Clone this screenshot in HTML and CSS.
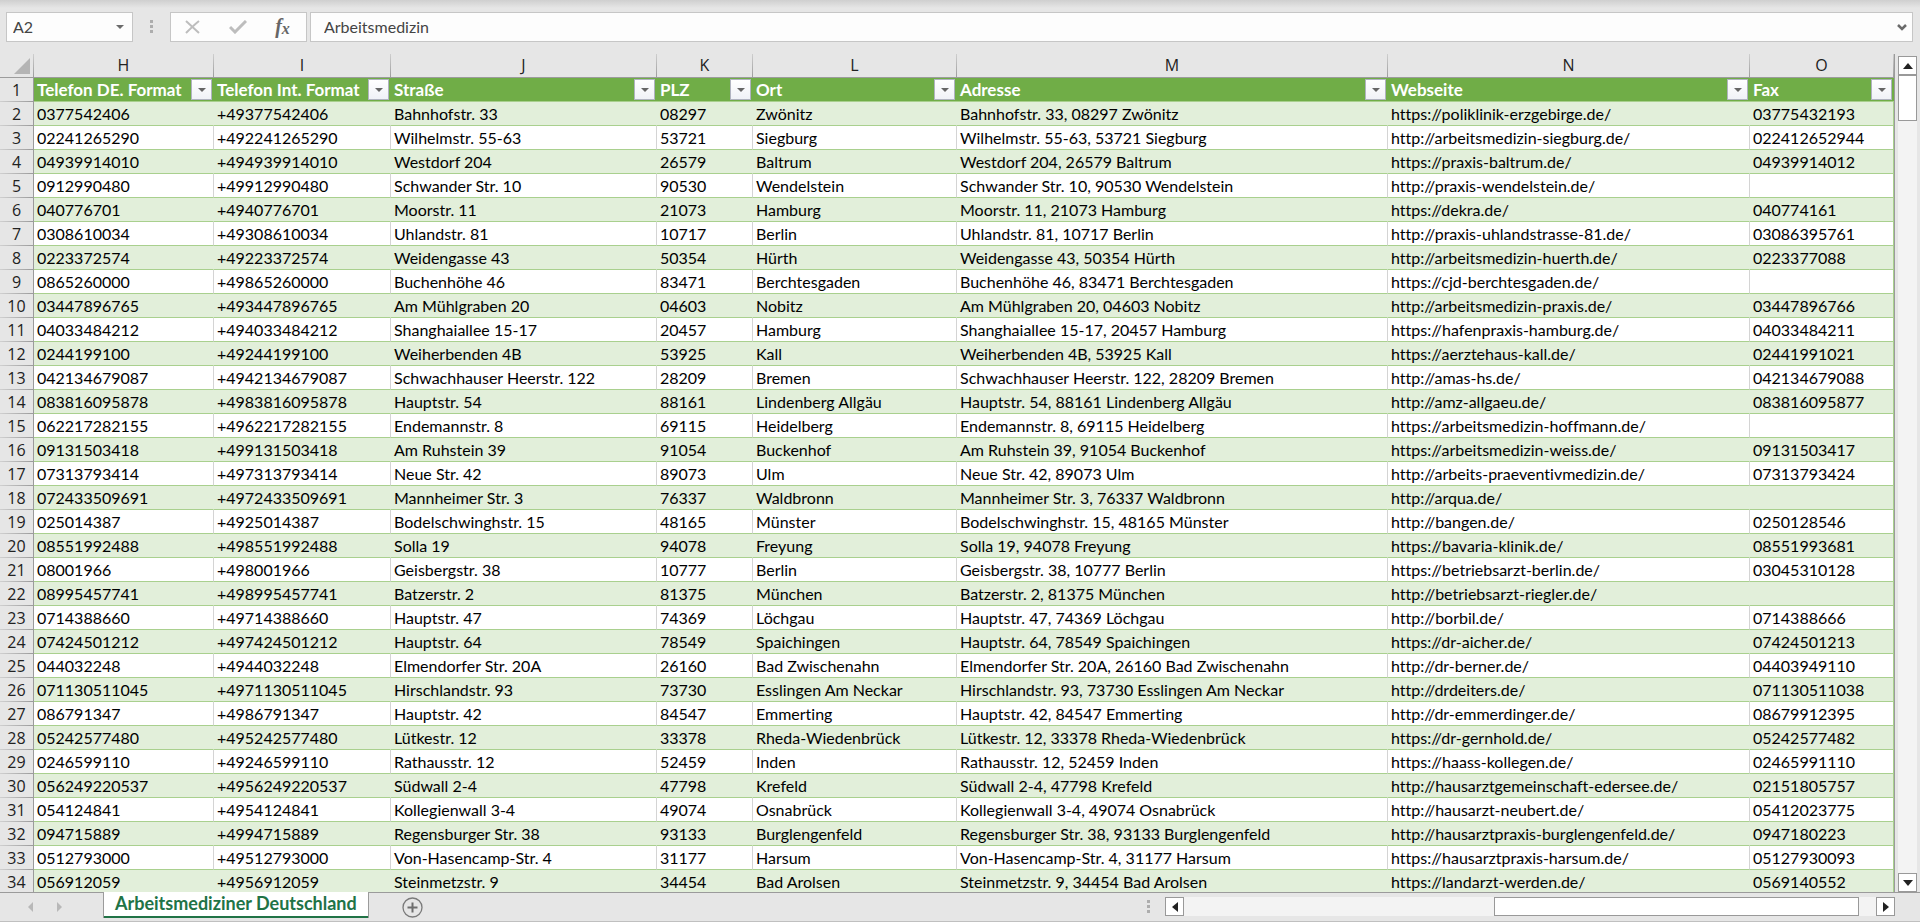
FILE: index.html
```html
<!DOCTYPE html>
<html lang="de">
<head>
<meta charset="utf-8">
<title>Arbeitsmediziner Deutschland</title>
<link rel="stylesheet" href="styles.css">
</head>
<body>
<header class="formula-bar">
  <div class="name-box">
    <input class="name-input" type="text" value="A2" aria-label="Namenfeld">
    <button class="name-drop" type="button" aria-label="Namen anzeigen"><svg width="8" height="4" viewBox="0 0 8 4"><path d="M0 0h8L4 4z" fill="#6b6b6b"/></svg></button>
  </div>
  <span class="grip"><i></i><i></i><i></i></span>
  <div class="formula-tools">
    <button type="button" aria-label="Abbrechen"><svg width="16" height="14" viewBox="0 0 16 14"><path d="M1 1l13 12M14 1C9 5 5 9 1 13" fill="none" stroke="#bdbdbd" stroke-width="2"/></svg></button>
    <button type="button" aria-label="Eingeben"><svg width="18" height="14" viewBox="0 0 18 14"><path d="M1 7l5 5L17 1" fill="none" stroke="#bdbdbd" stroke-width="3"/></svg></button>
    <button type="button" class="fx" aria-label="Funktion einfügen"><span class="fx-f">f</span><span class="fx-x">x</span></button>
  </div>
  <div class="formula-box">
    <input class="formula-input" type="text" value="Arbeitsmedizin" aria-label="Bearbeitungsleiste">
    <button class="formula-expand" type="button" aria-label="Erweitern"><svg width="10" height="7" viewBox="0 0 10 7"><path d="M1 1l4 4 4-4" fill="none" stroke="#6b6b6b" stroke-width="2.5"/></svg></button>
  </div>
</header>

<main class="workspace">
  <div class="sheet">
    <table class="grid">
      <colgroup>
        <col class="c-row"><col class="c-h"><col class="c-i"><col class="c-j"><col class="c-k"><col class="c-l"><col class="c-m"><col class="c-n"><col class="c-o">
      </colgroup>
      <thead>
        <tr class="letters">
          <th class="corner"><svg width="16" height="16" viewBox="0 0 16 16"><path d="M16 0v16H0z" fill="#b4b4b4"/></svg></th>
          <th>H</th><th>I</th><th>J</th><th>K</th><th>L</th><th>M</th><th>N</th><th>O</th>
        </tr>
      </thead>
      <tbody id="rows"></tbody>
    </table>
  </div>
  <div class="vscroll">
    <button type="button" aria-label="Nach oben"><svg width="10" height="6" viewBox="0 0 10 6"><path d="M5 0l5 6H0z" fill="#222"/></svg></button>
    <div class="vthumb"></div>
    <div class="track"></div>
    <button type="button" aria-label="Nach unten"><svg width="10" height="6" viewBox="0 0 10 6"><path d="M0 0h10L5 6z" fill="#222"/></svg></button>
  </div>
</main>

<footer class="tab-bar">
  <div class="tab-nav">
    <button type="button" aria-label="Vorheriges Blatt"><svg width="5" height="10" viewBox="0 0 5 10"><path d="M5 0v10L0 5z" fill="#b8b8b8"/></svg></button>
    <button type="button" aria-label="Nächstes Blatt"><svg width="5" height="10" viewBox="0 0 5 10"><path d="M0 0v10l5-5z" fill="#b8b8b8"/></svg></button>
  </div>
  <button class="tab" type="button">Arbeitsmediziner Deutschland</button>
  <button class="add" type="button" aria-label="Neues Blatt"><svg width="21" height="21" viewBox="0 0 21 21"><circle cx="10.500" cy="10.500" r="9.500" fill="none" stroke="#7a7a7a" stroke-width="1.300"/><path d="M10.500 5.500v10M5.500 10.500h10" stroke="#6e6e6e" stroke-width="2"/></svg></button>
  <span class="grip grip-end"><i></i><i></i><i></i></span>
  <div class="hscroll">
    <button type="button" aria-label="Nach links"><svg width="6" height="10" viewBox="0 0 6 10"><path d="M6 0v10L0 5z" fill="#222"/></svg></button>
    <div class="track"></div>
    <div class="hthumb"></div>
    <div class="track-end"></div>
    <button type="button" aria-label="Nach rechts"><svg width="6" height="10" viewBox="0 0 6 10"><path d="M0 0v10l6-5z" fill="#222"/></svg></button>
  </div>
</footer>
<script src="script.js"></script>
</body>
</html>
```
FILE: styles.css
```css
* { box-sizing: border-box; }

body {
  margin: 0;
  height: 100vh;
  display: flex;
  flex-direction: column;
  overflow: hidden;
  background: #e6e6e6;
  font-family: Lato, "Noto Sans", sans-serif;
  font-size: 16px;
  font-variant-ligatures: none;
  color: #000;
}

button {
  display: flex;
  align-items: center;
  justify-content: center;
  padding: 0;
  border: 0;
  background: none;
  font: inherit;
  color: inherit;
}

input {
  min-width: 0;
  flex: 1;
  padding: 0;
  border: 0;
  outline: 0;
  background: none;
  font: inherit;
  color: #444;
}

/* Formula bar */
.formula-bar {
  display: flex;
  align-items: flex-start;
  height: 54px;
  padding: 12px 6px 0;
  background: linear-gradient(#cfcfcf, #e6e6e6 8px);
}

.name-box,
.formula-tools,
.formula-box {
  display: flex;
  height: 30px;
  border: 1px solid #c6c6c6;
  background: #fdfdfd;
}

.name-box { width: 127px; }
.name-input { padding: 0 0 2px 6px; }
.name-drop { width: 24px; }

.grip {
  display: flex;
  flex-direction: column;
  gap: 2px;
  width: 3px;
  margin: 8px 17px 0;
}

.grip i {
  width: 3px;
  height: 3px;
  background: #adadad;
}

.formula-tools {
  width: 137px;
  margin-right: 3px;
}

.formula-tools button { flex: 1; padding: 0 2px 1px 0; }

.formula-tools .fx {
  font-family: "Liberation Serif", serif;
  font-style: italic;
  font-weight: bold;
  color: #666;
}

.fx-f { font-size: 20px; }
.fx-x { font-size: 16px; padding-top: 4px; }

.formula-box { flex: 1; margin-right: 1px; }
.formula-input { padding: 0 0 2px 13px; }
.formula-expand { width: 20px; }

/* Sheet */
.workspace {
  flex: 1;
  min-height: 0;
  display: flex;
  border-bottom: 1px solid #9b9b9b;
}

.sheet {
  flex: 1;
  min-width: 0;
  overflow: hidden;
  border-right: 1px solid #9b9b9b;
}

.grid {
  width: 100%;
  table-layout: fixed;
  border-collapse: separate;
  border-spacing: 0;
}

.c-row { width: 34px; }
.c-h { width: 180px; }
.c-i { width: 177px; }
.c-j { width: 266px; }
.c-k { width: 96px; }
.c-l { width: 204px; }
.c-n { width: 362px; }
.c-o { width: 144px; }

.grid th,
.grid td {
  height: 24px;
  padding: 0 3px;
  line-height: 23px;
  white-space: nowrap;
  text-align: left;
}

.grid .letters th {
  border-right: 1px solid;
  border-image: linear-gradient(#d0d0d0, #9b9b9b) 1;
  border-bottom: 1px solid #9b9b9b;
  font-family: "Open Sans", "Noto Sans", sans-serif;
  text-align: center;
  font-weight: normal;
  color: #222;
}

.grid .letters .corner {
  padding: 0 3px 3px 0;
  text-align: right;
  line-height: 0;
  vertical-align: bottom;
}

.grid .num {
  padding: 0;
  border-right: 1px solid #9b9b9b;
  background: linear-gradient(90deg, #d0d0d0, #9b9b9b) bottom / 100% 1px no-repeat;
  font-family: "Open Sans", "Noto Sans", sans-serif;
  text-align: center;
  font-weight: normal;
  color: #222;
}

.grid td {
  border-right: 1px solid #d4d4d4;
  border-bottom: 1px solid #a9d08e;
  background: #fff;
}

.grid td:last-child { border-right-color: #a9d08e; }

.grid .band td {
  border-right-color: #e2efda;
  background: #e2efda;
}

.grid .band td:last-child { border-right-color: #a9d08e; }

.grid .field {
  padding: 0 2px 0 3px;
  border-bottom: 1px solid #a9d08e;
  background: #70ad47;
  font-size: 17px;
  color: #fff;
}

.field-in {
  display: flex;
  align-items: center;
  justify-content: space-between;
  height: 23px;
}

.filter {
  width: 21px;
  height: 21px;
  border: 1px solid #b0b3c0;
  background: linear-gradient(#fff, #f0f2f7);
}

/* Scroll bars */
.vscroll {
  display: flex;
  flex-direction: column;
  width: 19px;
  margin: 2px 3px 0;
}

.vscroll button,
.hscroll button {
  width: 19px;
  height: 19px;
  border: 1px solid #999;
  background: #fff;
}

.vthumb {
  height: 46px;
  border: 1px solid #999;
  background: #fff;
}

.track { flex: 1; background: #f3f3f3; }

/* Tab bar */
.tab-bar {
  display: flex;
  align-items: flex-start;
  height: 29px;
  border-bottom: 1px solid #c0c0c0;
}

.tab-nav {
  display: flex;
  gap: 24px;
  width: 103px;
  padding: 9px 0 0 28px;
}

.tab {
  height: 26px;
  margin-top: -1px;
  padding: 0 11px 4px;
  border: solid #9b9b9b;
  border-width: 0 1px;
  box-shadow: inset 0 -2px #217346;
  background: #fff;
  font-size: 18px;
  font-weight: bold;
  color: #217346;
}

.add { margin: 4px 0 0 33px; }

.grip-end { margin: 7px 15px 0 auto; }

.hscroll {
  display: flex;
  width: 38%;
  height: 19px;
  margin: 4px 25px 0 0;
}

.hthumb {
  width: 50%;
  border: 1px solid #999;
  background: #fff;
}

.track-end { width: 17px; background: #f3f3f3; }
```
FILE: script.js
```js
const fields = ["Telefon DE. Format", "Telefon Int. Format", "Straße", "PLZ", "Ort", "Adresse", "Webseite", "Fax"];

// Telefon | Straße | PLZ | Ort | Webseite | Fax
const records = `
0377542406|Bahnhofstr. 33|08297|Zwönitz|https://poliklinik-erzgebirge.de/|03775432193
02241265290|Wilhelmstr. 55-63|53721|Siegburg|http://arbeitsmedizin-siegburg.de/|022412652944
04939914010|Westdorf 204|26579|Baltrum|https://praxis-baltrum.de/|04939914012
0912990480|Schwander Str. 10|90530|Wendelstein|http://praxis-wendelstein.de/|
040776701|Moorstr. 11|21073|Hamburg|https://dekra.de/|040774161
0308610034|Uhlandstr. 81|10717|Berlin|http://praxis-uhlandstrasse-81.de/|03086395761
0223372574|Weidengasse 43|50354|Hürth|http://arbeitsmedizin-huerth.de/|0223377088
0865260000|Buchenhöhe 46|83471|Berchtesgaden|https://cjd-berchtesgaden.de/|
03447896765|Am Mühlgraben 20|04603|Nobitz|http://arbeitsmedizin-praxis.de/|03447896766
04033484212|Shanghaiallee 15-17|20457|Hamburg|https://hafenpraxis-hamburg.de/|04033484211
0244199100|Weiherbenden 4B|53925|Kall|https://aerztehaus-kall.de/|02441991021
042134679087|Schwachhauser Heerstr. 122|28209|Bremen|http://amas-hs.de/|042134679088
083816095878|Hauptstr. 54|88161|Lindenberg Allgäu|http://amz-allgaeu.de/|083816095877
062217282155|Endemannstr. 8|69115|Heidelberg|https://arbeitsmedizin-hoffmann.de/|
09131503418|Am Ruhstein 39|91054|Buckenhof|https://arbeitsmedizin-weiss.de/|09131503417
07313793414|Neue Str. 42|89073|Ulm|http://arbeits-praeventivmedizin.de/|07313793424
072433509691|Mannheimer Str. 3|76337|Waldbronn|http://arqua.de/|
025014387|Bodelschwinghstr. 15|48165|Münster|http://bangen.de/|0250128546
08551992488|Solla 19|94078|Freyung|https://bavaria-klinik.de/|08551993681
08001966|Geisbergstr. 38|10777|Berlin|https://betriebsarzt-berlin.de/|03045310128
08995457741|Batzerstr. 2|81375|München|http://betriebsarzt-riegler.de/|
0714388660|Hauptstr. 47|74369|Löchgau|http://borbil.de/|0714388666
07424501212|Hauptstr. 64|78549|Spaichingen|https://dr-aicher.de/|07424501213
044032248|Elmendorfer Str. 20A|26160|Bad Zwischenahn|http://dr-berner.de/|04403949110
071130511045|Hirschlandstr. 93|73730|Esslingen Am Neckar|http://drdeiters.de/|071130511038
086791347|Hauptstr. 42|84547|Emmerting|http://dr-emmerdinger.de/|08679912395
05242577480|Lütkestr. 12|33378|Rheda-Wiedenbrück|https://dr-gernhold.de/|05242577482
0246599110|Rathausstr. 12|52459|Inden|https://haass-kollegen.de/|02465991110
056249220537|Südwall 2-4|47798|Krefeld|http://hausarztgemeinschaft-edersee.de/|02151805757
054124841|Kollegienwall 3-4|49074|Osnabrück|http://hausarzt-neubert.de/|05412023775
094715889|Regensburger Str. 38|93133|Burglengenfeld|http://hausarztpraxis-burglengenfeld.de/|0947180223
0512793000|Von-Hasencamp-Str. 4|31177|Harsum|https://hausarztpraxis-harsum.de/|05127930093
056912059|Steinmetzstr. 9|34454|Bad Arolsen|https://landarzt-werden.de/|0569140552
`.trim().split("\n").map(line => line.split("|"));

const arrow = '<svg width="8" height="4" viewBox="0 0 8 4"><path d="M0 0h8L4 4z" fill="#666"/></svg>';

const headRow = `<tr><th class="num">1</th>${fields.map(name =>
  `<th class="field"><div class="field-in"><span>${name}</span><button class="filter" type="button" aria-label="${name} filtern">${arrow}</button></div></th>`
).join("")}</tr>`;

const bodyRows = records.map(([tel, street, plz, city, web, fax], i) => {
  const cells = [tel, "+49" + tel.slice(1), street, plz, city, `${street}, ${plz} ${city}`, web, fax];
  return `<tr class="${i % 2 ? "" : "band"}"><th class="num">${i + 2}</th>${cells.map(c => `<td>${c}</td>`).join("")}</tr>`;
}).join("");

document.getElementById("rows").innerHTML = headRow + bodyRows;
```
